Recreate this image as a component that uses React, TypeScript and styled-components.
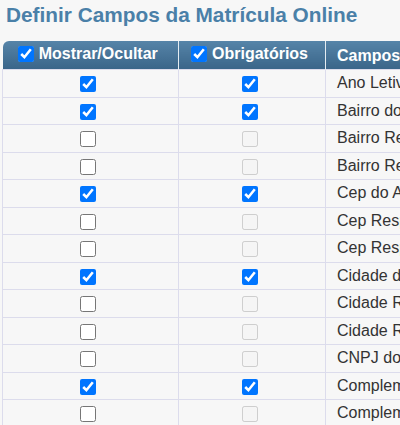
import React from "react";
import styled, { createGlobalStyle } from "styled-components";

interface Campo {
  nome: string;
  mostrar: boolean;
  obrigatorio: boolean;
}

const campos: Campo[] = [
  { nome: "Ano Letivo", mostrar: true, obrigatorio: true },
  { nome: "Bairro do Aluno", mostrar: true, obrigatorio: true },
  { nome: "Bairro Responsável Financeiro", mostrar: false, obrigatorio: false },
  { nome: "Bairro Responsável Pedagógico", mostrar: false, obrigatorio: false },
  { nome: "Cep do Aluno", mostrar: true, obrigatorio: true },
  { nome: "Cep Responsável Financeiro", mostrar: false, obrigatorio: false },
  { nome: "Cep Responsável Pedagógico", mostrar: false, obrigatorio: false },
  { nome: "Cidade do Aluno", mostrar: true, obrigatorio: true },
  { nome: "Cidade Responsável Financeiro", mostrar: false, obrigatorio: false },
  { nome: "Cidade Responsável Pedagógico", mostrar: false, obrigatorio: false },
  { nome: "CNPJ do Responsável Financeiro", mostrar: false, obrigatorio: false },
  { nome: "Complemento do Aluno", mostrar: true, obrigatorio: true },
  { nome: "Complemento Responsável Financeiro", mostrar: false, obrigatorio: false },
];

const App = () => {
  return (
    <>
      <GlobalStyle />
      <Page>
        <Title>Definir Campos da Matrícula Online</Title>
        <Table>
          <colgroup>
            <MostrarColumn />
            <ObrigColumn />
            <CampoColumn />
          </colgroup>
          <thead>
            <tr>
              <HeaderCell className="first">
                <HeaderLabel>
                  <Check type="checkbox" defaultChecked />
                  Mostrar/Ocultar
                </HeaderLabel>
              </HeaderCell>
              <HeaderCell>
                <HeaderLabel>
                  <Check type="checkbox" defaultChecked />
                  Obrigatórios
                </HeaderLabel>
              </HeaderCell>
              <HeaderCell className="left">Campos</HeaderCell>
            </tr>
          </thead>
          <tbody>
            {campos.map((campo) => (
              <Row key={campo.nome}>
                <Cell>
                  <Check type="checkbox" defaultChecked={campo.mostrar} />
                </Cell>
                <Cell>
                  <Check
                    type="checkbox"
                    defaultChecked={campo.obrigatorio}
                    disabled={!campo.mostrar}
                  />
                </Cell>
                <NameCell>{campo.nome}</NameCell>
              </Row>
            ))}
          </tbody>
        </Table>
      </Page>
    </>
  );
};

export default App;

const GlobalStyle = createGlobalStyle`
  html, body {
    margin: 0;
    overflow: hidden;
    background: #f7f7f7;
    font-family: "Liberation Sans", Arial, sans-serif;
  }
`;

const Page = styled.div`
  padding: 2px 0 0 2px;
`;

const Title = styled.h2`
  margin: 0 0 13px 4px;
  font-size: 20.8px;
  line-height: 26px;
  font-weight: bold;
  color: #4a80a8;
  white-space: nowrap;
`;

const Table = styled.table`
  border-collapse: collapse;
  table-layout: fixed;
  width: 600px;
`;

const MostrarColumn = styled.col`
  width: 176px;
`;

const ObrigColumn = styled.col`
  width: 147px;
`;

const CampoColumn = styled.col`
  width: 277px;
`;

const HeaderCell = styled.th`
  height: 27px;
  padding: 1px 5px 0 0;
  background: linear-gradient(#5684a8, #3a6589);
  color: #fff;
  font-size: 16px;
  font-weight: bold;
  text-align: center;
  white-space: nowrap;
  overflow: hidden;
  border-left: 1px solid #e4ecf2;
  &.first {
    border-left: none;
    border-top-left-radius: 6px;
  }
  &.left {
    padding: 1px 11px 0;
    text-align: left;
  }
`;

const HeaderLabel = styled.label`
  display: inline-flex;
  align-items: center;
  gap: 5px;
`;

const Row = styled.tr`
  height: 27.5px;
`;

const Cell = styled.td`
  padding: 0 5px 0 0;
  border: 1px solid #dcdcec;
  text-align: center;
  vertical-align: middle;
`;

const NameCell = styled.td`
  padding: 0 11px;
  border: 1px solid #dcdcec;
  color: #333;
  font-size: 16px;
  white-space: nowrap;
  overflow: hidden;
  vertical-align: middle;
`;

const Check = styled.input`
  width: 16px;
  height: 16px;
  margin: 0;
  vertical-align: middle;
`;
